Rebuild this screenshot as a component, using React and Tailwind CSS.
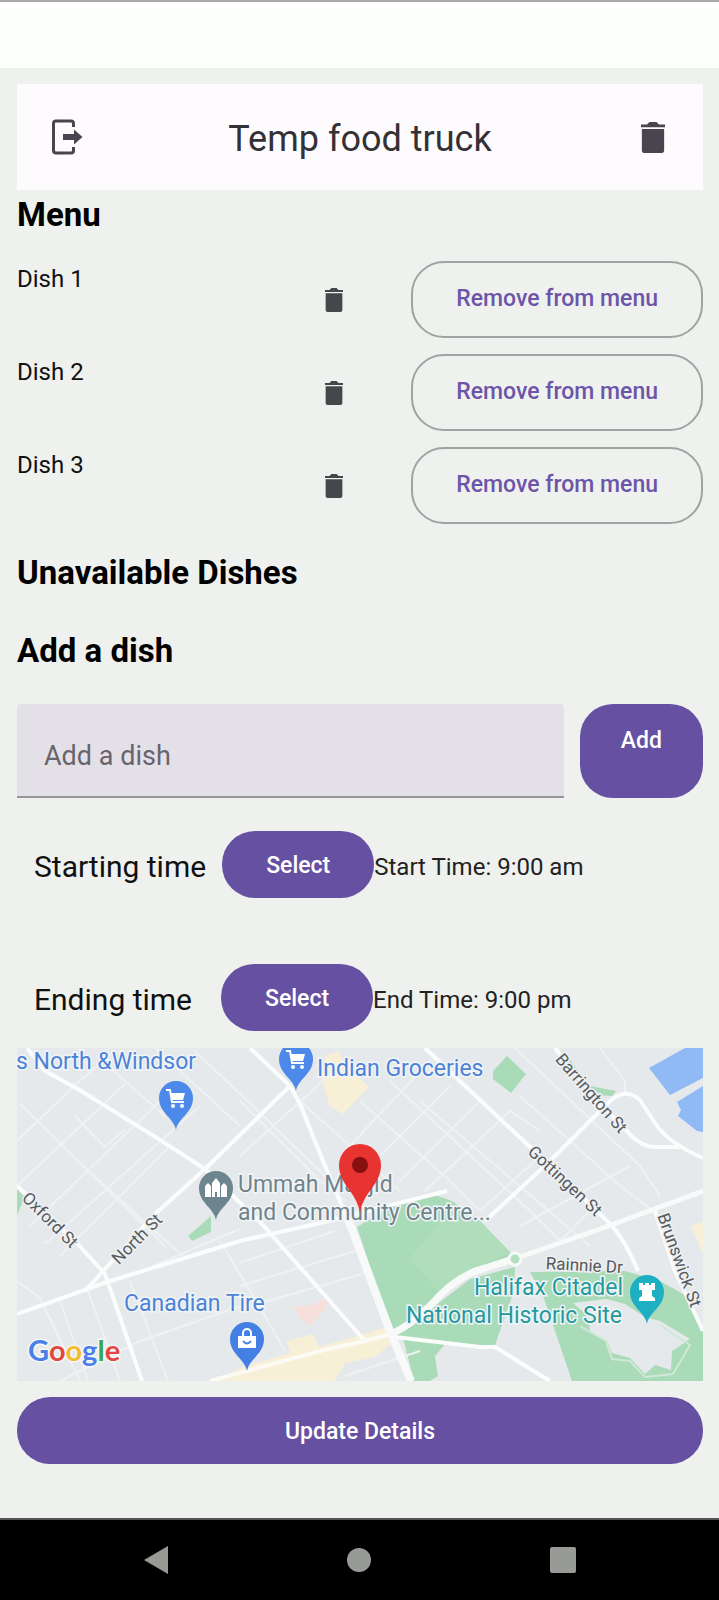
import React from "react";

const dishes = ["Dish 1", "Dish 2", "Dish 3"];

function TrashIcon({ className }) {
  return (
    <svg viewBox="5 3 14 18" preserveAspectRatio="none" className={className} fill="currentColor" aria-hidden="true">
      <path d="M5.500 19.500c0 .9.700 1.500 1.500 1.500h10c.8 0 1.500-.6 1.500-1.500V7H5.500v12.500zM19 4.500h-3.500l-1.500-1.500h-4l-1.500 1.500H5V6h14V4.500z" />
    </svg>
  );
}

function LogoutIcon() {
  return (
    <svg viewBox="0 0 31 36" className="h-9 w-8" aria-hidden="true">
      <path d="M22 8V4.500Q22 2 19.500 2H4.500Q2 2 2 4.500V31.500Q2 34 4.500 34H19.500Q22 34 22 31.500V28" fill="none" stroke="#49454f" strokeWidth="3" />
      <path d="M11.500 15H22.500V10.500L31 18L22.500 25.500V21H11.500Z" fill="#49454f" />
    </svg>
  );
}

function TimeRow({ label, value }) {
  return (
    <div className="flex items-center p-[17px]">
      <span className="mr-4 min-w-[171px] pt-1 text-[30px] leading-9">{label}</span>
      <button type="button" className="h-[67px] rounded-[33px] bg-[#6650a2] px-11 pt-1 text-[23px] font-medium text-white">
        Select
      </button>
      <span className="pt-1 text-[24px] leading-8 text-[#222]">{value}</span>
    </div>
  );
}

const minorStreets = [
  "M17 1140L75 1084L115 1050", "M17 1185L125 1083", "M30 1225L160 1100", "M45 1243L200 1105",
  "M60 1255L168 1147", "M75 1115L105 1146L125 1128", "M20 1103L75 1157L165 1245", "M75 1157L160 1235L185 1256",
  "M110 1067L165 1115", "M155 1047L240 1125", "M195 1050L260 1112L330 1180",
  "M17 1280L40 1297L80 1380", "M60 1300L88 1380", "M88 1290L120 1380", "M130 1280L168 1380",
  "M60 1380L140 1340L250 1302", "M130 1275L240 1228", "M220 1240L262 1310L285 1350",
  "M240 1262L335 1230", "M240 1285L355 1250", "M250 1305L365 1272",
  "M240 1100L315 1175L345 1200", "M240 1155L345 1060", "M300 1100L400 1190",
  "M360 1100L450 1180L480 1210", "M390 1080L530 1210L560 1240", "M420 1100L590 1245",
  "M345 1150L430 1060", "M370 1165L450 1085", "M400 1180L480 1100", "M425 1190L510 1110L540 1130",
  "M480 1210L540 1155", "M520 1225L630 1165", "M560 1240L600 1200",
  "M520 1095L620 1185L660 1215", "M515 1047L640 1165L660 1195", "M600 1047L625 1080L625 1092",
  "M345 1375L420 1350",
];

const majorStreets = [
  "M27 1047L45 1070L78 1088L157 1137L205 1168L262 1223L365 1340",
  "M290 1085L205 1168L155 1213L85 1290",
  "M17 1185L75 1240L105 1273L142 1380",
  "M17 1313L107 1281L240 1240L320 1222L447 1190",
  "M250 1047L290 1085L300 1103L325 1165L342 1205",
  "M425 1047L479 1098L530 1146L605 1218Q622 1232 638 1270",
  "M485 1220L550 1160L610 1100Q626 1086 640 1099L655 1122Q668 1142 703 1157",
  "M555 1047L597 1100L625 1128Q640 1146 655 1146H680",
  "M655 1210L675 1270L703 1330",
  "M395 1336L480 1346H495L550 1380",
];

function PlacePin({ x, y, fill, children }) {
  return (
    <g transform={`translate(${x} ${y})`}>
      <path d="M0 32C-2 20-17 15-17 0A17 17 0 0 1 17 0C17 15 2 20 0 32Z" fill={fill} />
      {children}
    </g>
  );
}

function Cart() {
  return (
    <g fill="#fff">
      <path d="M-10-8H-6L-4 4H8" fill="none" stroke="#fff" strokeWidth="2" />
      <path d="M-6-5H9L7 2H-4Z" />
      <circle cx="-3" cy="8" r="2" />
      <circle cx="6" cy="8" r="2" />
    </g>
  );
}

function StreetMap() {
  return (
    <svg viewBox="17 1047 686 333" role="img" aria-label="Map" className="block w-full bg-[#e6e9eb] font-[Roboto,sans-serif]">
      <g fill="#aadbb9">
        <path d="M357 1226L395 1203L435 1194L452 1200L480 1220L513 1254L480 1266L430 1300L392 1333Z" />
        <path d="M395 1334L435 1305L470 1278L515 1266L514 1290L495 1344L478 1345L395 1335Z" />
        <path d="M403 1337L445 1343L435 1355L438 1375L430 1380H414Z" />
        <path d="M530 1271L625 1270L660 1280L690 1297L703 1330V1380H572L555 1330L543 1295Z" />
        <path d="M493 1070L507 1055L526 1073L511 1092L493 1078Z" />
        <path d="M560 1047L566 1054L590 1085L616 1090L612 1095L598 1094L583 1080Z" />
        <path d="M17 1188L25 1196L17 1214Z" />
        <path d="M188 1235L211 1215L211 1231L192 1240Z" />
      </g>
      <path d="M410 1258L440 1220L480 1220L510 1252L480 1264L440 1292Z" fill="#b0debd" />
      <g fill="#90baf3">
        <path d="M649 1067L685 1047H703V1077L670 1094Z" />
        <path d="M677 1101L703 1085V1131L697 1130L678 1115L681 1109Z" />
      </g>
      <g fill="#f8f0d6">
        <path d="M215 1380L240 1367L290 1352L287 1340L313 1333L319 1346L388 1326L396 1338L375 1356L345 1362L335 1380Z" />
        <path d="M325 1055L338 1050L345 1064L369 1086L343 1113L330 1105L322 1080Z" />
        <path d="M691 1225L703 1221V1252Z" />
      </g>
      <path d="M293 1306L312 1304L330 1295L325 1308L311 1325L300 1317Z" fill="#f7dfdb" />
      <path
        d="M573 1302L606 1298L625 1303L645 1316L660 1320L690 1338L672 1350L671 1369L655 1364L645 1373L630 1357L612 1352L607 1340L590 1330L588 1315Z"
        fill="#e6e9eb"
      />
      <path d="M580 1325L606 1340L612 1358L630 1360L645 1376L673 1373L690 1344L660 1324" fill="none" stroke="#cfe8d8" strokeWidth="2" />

      <g fill="none" stroke="#eff1f2" strokeWidth="2">
        {minorStreets.map((d) => (
          <path key={d} d={d} />
        ))}
      </g>
      <g fill="none" stroke="#fbfcfc" strokeWidth="4" strokeLinejoin="round">
        {majorStreets.map((d) => (
          <path key={d} d={d} />
        ))}
      </g>
      <path d="M210 1380L320 1350L365 1340L391 1333" fill="none" stroke="#fbfaf4" strokeWidth="4" />
      <path d="M391 1333Q410 1325 430 1305Q455 1275 485 1267L514 1258" fill="none" stroke="#f7faf9" strokeWidth="7" />
      <path d="M514 1258L600 1228L703 1190" fill="none" stroke="#f7faf9" strokeWidth="5" />
      <path d="M342 1205L352 1228L391 1333L411 1380" fill="none" stroke="#f7faf9" strokeWidth="8" />
      <circle cx="515" cy="1258" r="6" fill="#b2dfbf" stroke="#f7faf9" strokeWidth="3" />

      <g fontSize="17" fill="#555a5e" stroke="#eef0f1" strokeWidth="3" paintOrder="stroke" textAnchor="middle">
        <text transform="translate(587 1096) rotate(49)">Barrington St</text>
        <text transform="translate(561 1184) rotate(43)">Gottingen St</text>
        <text transform="translate(46 1223) rotate(45)">Oxford St</text>
        <text transform="translate(141 1242) rotate(-45)">North St</text>
        <text transform="translate(584 1270) rotate(3)">Rainnie Dr</text>
        <text transform="translate(674 1261) rotate(70)">Brunswick St</text>
      </g>

      <g fontSize="23" stroke="#f1f5f8" strokeWidth="3" paintOrder="stroke">
        <text x="16" y="1068" fill="#4d82d6">s North &amp;Windsor</text>
        <text x="317" y="1075" fill="#4d82d6">Indian Groceries</text>
        <text x="124" y="1310" fill="#4d82d6">Canadian Tire</text>
        <text x="238" y="1191" fill="#71838a">Ummah Masjid</text>
        <text x="238" y="1219" fill="#71838a">and Community Centre...</text>
        <text x="623" y="1294" fill="#259a9d" textAnchor="end">Halifax Citadel</text>
        <text x="622" y="1322" fill="#259a9d" textAnchor="end">National Historic Site</text>
      </g>

      <PlacePin x={176} y={1097} fill="#4d89ea"><Cart /></PlacePin>
      <PlacePin x={296} y={1058} fill="#4d89ea"><Cart /></PlacePin>
      <PlacePin x={216} y={1187} fill="#6c858f">
        <path d="M-11 9V-2L-8-5L-5-2V9ZM-4 9V-5L0-10L4-5V9ZM5 9V-2L8-5L11-2V9Z" fill="#fff" />
        <path d="M-1 9V4H1V9Z" fill="#6c858f" />
      </PlacePin>
      <PlacePin x={247} y={1338} fill="#4480e4">
        <path d="M-9-3H9V9H-9Z" fill="#fff" />
        <path d="M-4-3V-6A4 4 0 0 1 4-6V-3" fill="none" stroke="#fff" strokeWidth="2" />
        <path d="M-4 2Q0 7 4 2" fill="none" stroke="#4480e4" strokeWidth="2" />
      </PlacePin>
      <PlacePin x={647} y={1291} fill="#1eb0c2">
        <path d="M-8-9H-4V-7H-2V-9H2V-7H4V-9H8V-2H5V4L8 6V9H-8V6L-5 4V-2H-8Z" fill="#fff" />
      </PlacePin>
      <g transform="translate(360 1164)">
        <path d="M0 48C-3 27-21 20-21 0A21 21 0 0 1 21 0C21 20 3 27 0 48Z" fill="#e73431" />
        <circle r="8" fill="#85100f" />
      </g>

      <text x="28" y="1360" fontSize="29" fontFamily="Lato, sans-serif" fontWeight="700" stroke="#f5f7f8" strokeWidth="3" paintOrder="stroke">
        <tspan fill="#4a80e8">G</tspan>
        <tspan fill="#e2483f">o</tspan>
        <tspan fill="#f2bc2d">o</tspan>
        <tspan fill="#4a80e8">g</tspan>
        <tspan fill="#37a457">l</tspan>
        <tspan fill="#e2483f">e</tspan>
      </text>
    </svg>
  );
}

export default function App() {
  return (
    <div className="flex min-h-screen flex-col bg-[#eff1ee] font-[Roboto,sans-serif] text-[#111]">
      <div className="h-[68px] border-t-2 border-[#aaaaaa] bg-[#fdfffd]" />

      <main className="flex flex-1 flex-col pt-4 pr-4 pl-[17px]">
        <header className="flex h-[106px] items-center bg-[#fefbfe] px-[34px] text-[#49454f]">
          <button type="button" aria-label="Log out" className="w-8">
            <LogoutIcon />
          </button>
          <h1 className="flex-1 pt-1 text-center text-[36px] leading-none text-[#333136]">Temp food truck</h1>
          <button type="button" aria-label="Delete truck" className="flex w-8 justify-center">
            <TrashIcon className="h-[31px] w-6" />
          </button>
        </header>

        <h2 className="pt-1 text-[33px] leading-[42px] font-bold text-black">Menu</h2>
        <ul className="mt-[25px] flex flex-col gap-4">
          {dishes.map((dish) => (
            <li key={dish} className="flex h-[77px]">
              <span className="flex-1 pt-1 text-[24px] leading-7">{dish}</span>
              <button type="button" aria-label={`Delete ${dish}`} className="mr-[68px] text-[#45474a]">
                <TrashIcon className="h-6 w-[18px]" />
              </button>
              <button type="button" className="rounded-[33px] border-2 border-[#a0a3a1] px-[43px] text-[23px] font-medium text-[#6c55a8]">
                Remove from menu
              </button>
            </li>
          ))}
        </ul>

        <h2 className="mt-7 text-[33px] leading-[42px] font-bold text-black">Unavailable Dishes</h2>
        <h2 className="mt-9 text-[33px] leading-[42px] font-bold text-black">Add a dish</h2>

        <form className="mt-8 flex h-[94px] gap-4" onSubmit={(e) => e.preventDefault()}>
          <input
            type="text"
            aria-label="Add a dish"
            placeholder="Add a dish"
            className="min-w-0 flex-1 rounded-t border-b-2 border-[#98929d] bg-[#e4e0e8] px-[27px] pt-3 text-[27px] outline-none placeholder:text-[#67646b]"
          />
          <button type="submit" className="flex justify-center rounded-[33px] bg-[#6650a2] px-[41px] pt-5 text-[23px] font-medium text-white">
            Add
          </button>
        </form>

        <section className="mt-4 flex flex-col gap-8">
          <TimeRow label="Starting time" value="Start Time: 9:00 am" />
          <TimeRow label="Ending time" value="End Time: 9:00 pm" />
        </section>

        <StreetMap />

        <button type="button" className="mt-4 mb-[54px] h-[67px] rounded-[33px] bg-[#6650a2] pt-1 text-[23px] font-medium text-white">
          Update Details
        </button>
      </main>

      <nav className="flex h-[82px] items-center justify-around border-t-2 border-[#555] bg-black px-[54px]">
        <button type="button" aria-label="Back">
          <svg viewBox="0 0 24 28" className="h-7 w-6" fill="#989a96"><path d="M24 0V28L0 14Z" /></svg>
        </button>
        <button type="button" aria-label="Home" className="size-6 rounded-full bg-[#989a96]" />
        <button type="button" aria-label="Recent apps" className="size-[26px] rounded-xs bg-[#989a96]" />
      </nav>
    </div>
  );
}
